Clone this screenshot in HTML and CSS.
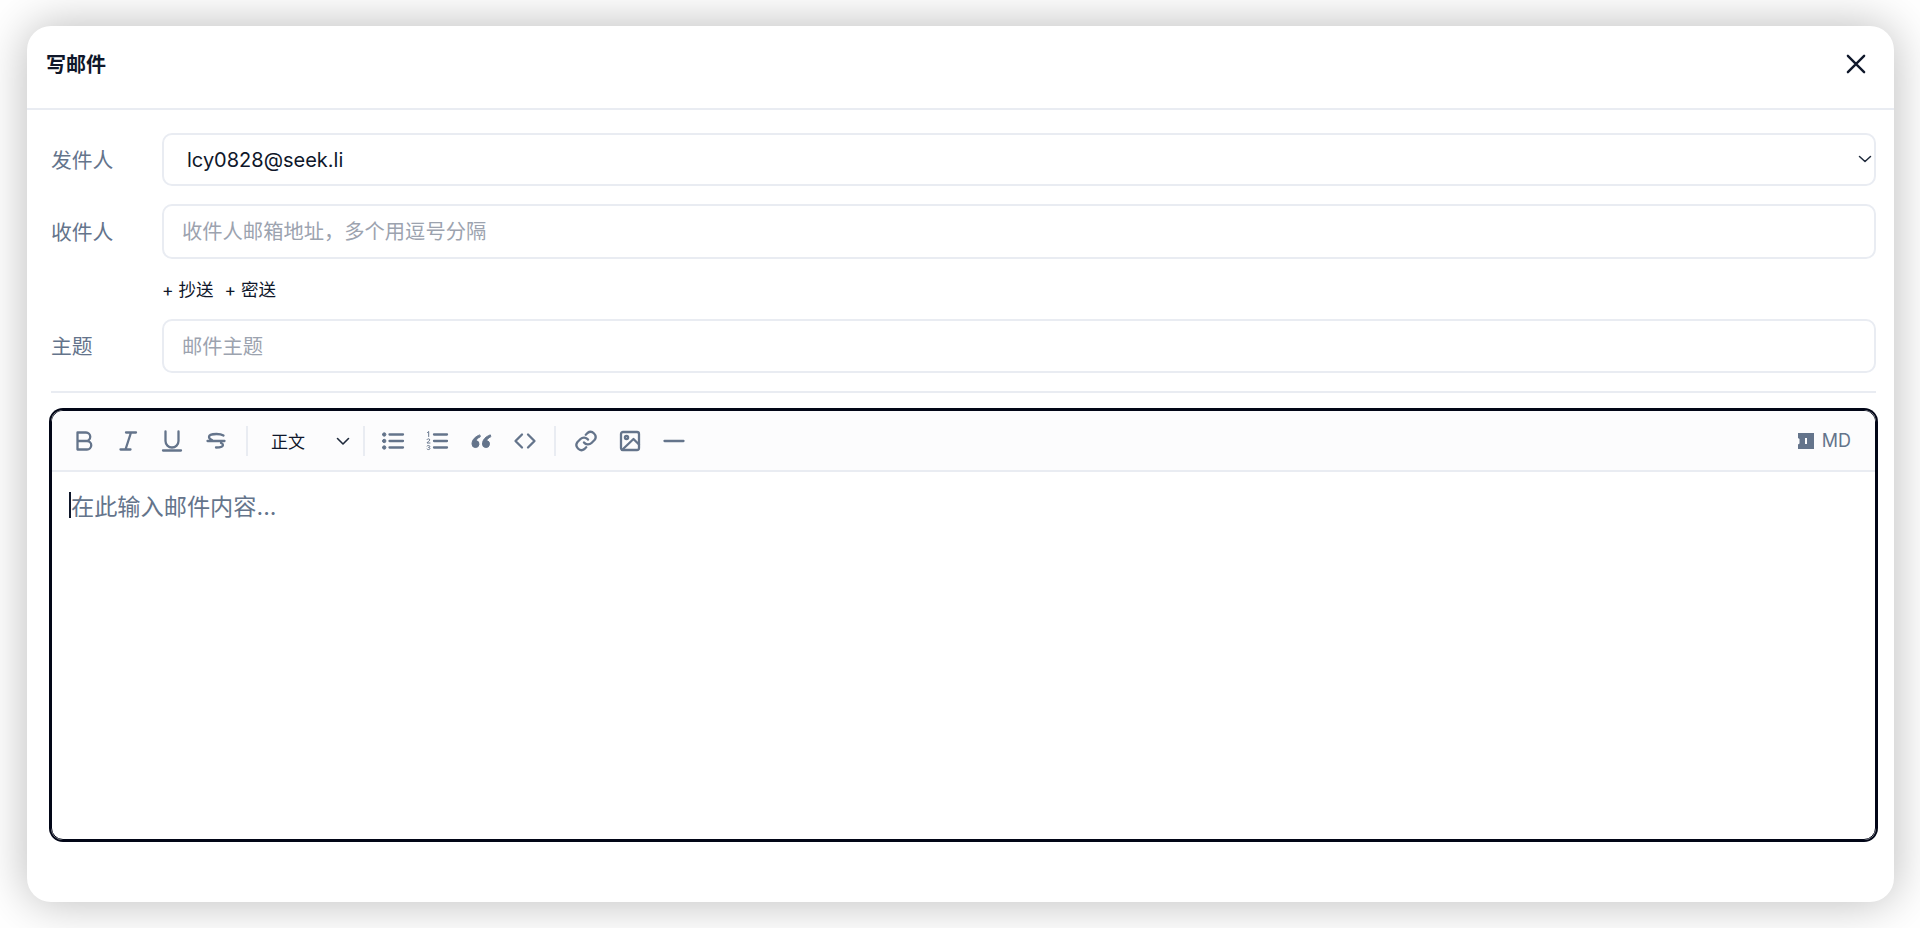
FILE: index.html
```html
<!DOCTYPE html>
<html lang="zh-CN">
<head>
    <meta charset="UTF-8">
    <meta name="viewport" content="width=device-width, initial-scale=1.0">
    <title>写邮件</title>
    <link rel="stylesheet" href="styles.css">
</head>
<body>
    <div class="modal">
        <header class="modal-header">
            <h1>写邮件</h1>
            <button class="close-button" aria-label="关闭">
                <svg width="26" height="26" viewBox="0 0 24 24" fill="none" stroke="#0f172a" stroke-width="2.2" stroke-linecap="round"><path d="M4.5 4.5l15 15M19.5 4.5l-15 15"/></svg>
            </button>
        </header>
        <div class="modal-body">
            <div class="form-row from-row">
                <label>发件人</label>
                <div class="select-wrap">
                    <select class="field from-select">
                        <option>lcy0828@seek.li</option>
                    </select>
                    <svg class="select-arrow" width="16" height="16" viewBox="0 0 16 16" fill="none" stroke="#1e293b" stroke-width="1.5" stroke-linecap="round" stroke-linejoin="round"><path d="M2.5 5.5L8 10.5l5.5-5"/></svg>
                </div>
            </div>
            <div class="form-row to-row">
                <label>收件人</label>
                <input class="field" type="text" placeholder="收件人邮箱地址，多个用逗号分隔">
            </div>
            <div class="cc-links">
                <a>+ 抄送</a>
                <a>+ 密送</a>
            </div>
            <div class="form-row subject-row">
                <label>主题</label>
                <input class="field" type="text" placeholder="邮件主题">
            </div>
            <div class="divider"></div>
            <div class="editor">
                <div class="toolbar">
                    <button class="tool" title="粗体"><svg viewBox="0 0 24 24"><path d="M5.500 3.500h8.500a4.250 4.250 0 0 1 0 8.500h-8.500zM5.500 12h9.500a4.250 4.250 0 0 1 0 8.500H5.500z"/></svg></button>
                    <button class="tool" title="斜体"><svg viewBox="0 0 24 24"><path d="M10 3.500h10M4.500 20.500h10M15 3.500l-5.500 17"/></svg></button>
                    <button class="tool" title="下划线"><svg viewBox="0 0 24 24"><path d="M5.500 2.500v9.500a6.500 6.500 0 0 0 13 0V2.500M3 21.500h18"/></svg></button>
                    <button class="tool" title="删除线"><svg viewBox="0 0 24 24"><path d="M19.500 6.500C17.500 5.300 15 5 12.500 5 8 5 5 6 5 8c0 1.300 1.200 2.300 3 3M3.500 12h17M17 14c1.300.5 2 1.200 2 2 0 1.600-3 2.500-7 2.500"/></svg></button>
                    <span class="tool-sep"></span>
                    <div class="format-select">
                        <span>正文</span>
                        <svg width="16" height="16" viewBox="0 0 16 16" fill="none" stroke="#1e293b" stroke-width="1.6" stroke-linecap="round" stroke-linejoin="round"><path d="M2.500 5.500L8 11l5.500-5.500"/></svg>
                    </div>
                    <span class="tool-sep after-format"></span>
                    <button class="tool" title="无序列表"><svg viewBox="0 0 24 24"><path d="M8.500 5.500H22M8.500 12H22M8.500 18.500H22"/><path class="dot" d="M1.500 5.500a1.700 1.700 0 1 0 3.400 0a1.700 1.700 0 1 0-3.400 0M1.500 12a1.700 1.700 0 1 0 3.400 0a1.700 1.700 0 1 0-3.400 0M1.500 18.500a1.700 1.700 0 1 0 3.400 0a1.700 1.700 0 1 0-3.400 0"/></svg></button>
                    <button class="tool" title="有序列表"><svg viewBox="0 0 24 24"><path d="M9 5.500H22M9 12H22M9 18.500H22"/><path class="thin" d="M2.500 3.500l1.200-1v5M2 10.500c.5-1 2.800-1 2.800.5 0 1-2.800 2-2.800 3h3M2 17c.6-.8 2.800-.8 2.800.5 0 .6-.6.9-1.300.9.700 0 1.400.4 1.400 1.100 0 1.400-2.300 1.400-2.900.5"/></svg></button>
                    <button class="tool" title="引用"><svg viewBox="0 0 24 24"><path class="dot" d="M10.500 6C6.500 7.500 3 10.500 3 15a3.500 3.500 0 1 0 4.200-3.400c.3-1.300 1.700-2.700 3.800-3.700zM21 6c-4 1.500-7.500 4.500-7.500 9a3.500 3.500 0 1 0 4.200-3.400c.3-1.300 1.700-2.700 3.800-3.700z"/></svg></button>
                    <button class="tool" title="代码"><svg viewBox="0 0 24 24"><path d="M9 5.500L2.500 12 9 18.500M15 5.500l6.500 6.500-6.500 6.500"/></svg></button>
                    <span class="tool-sep before-link"></span>
                    <button class="tool" title="链接"><svg viewBox="0 0 24 24"><path d="M10 13.500a5 5 0 0 0 7.500.5l3-3a5 5 0 0 0-7-7l-1.700 1.700"/><path d="M14 10.500a5 5 0 0 0-7.500-.5l-3 3a5 5 0 0 0 7 7l1.700-1.700"/></svg></button>
                    <button class="tool" title="图片"><svg viewBox="0 0 24 24"><rect x="3" y="3" width="18" height="18" rx="2"/><circle cx="8.500" cy="8.500" r="1.600"/><path d="M21 15.500L15.500 10 4 21"/></svg></button>
                    <button class="tool" title="分隔线"><svg viewBox="0 0 24 24"><path d="M2.500 12h19"/></svg></button>
                    <div class="md-toggle">
                        <svg width="16" height="16" viewBox="0 0 16 16"><path fill="#64748b" fill-rule="evenodd" d="M0 0h16v16H0v-4.500l1.500-1V6L0 5zM7 5v6h2V5z"/></svg>
                        <span>MD</span>
                    </div>
                </div>
                <div class="editor-content">
                    <span class="caret"></span><span class="editor-placeholder">在此输入邮件内容...</span>
                </div>
            </div>
        </div>
    </div>
</body>
</html>
```

FILE: styles.css
```css
* {
    box-sizing: border-box;
}
body {
    font-family: 'Inter', 'Noto Sans CJK SC', sans-serif;
    margin: 0;
    padding: 26px 26px 26px 27px;
    height: 928px;
    overflow: hidden;
    background-color: white;
    color: #0f172a;
}
.modal {
    height: 876px;
    background-color: white;
    border-radius: 24px;
    box-shadow: 0 0 48px rgba(0, 0, 0, 0.28);
}
.modal-header {
    display: flex;
    align-items: center;
    justify-content: space-between;
    height: 84px;
    padding: 0 25px 7px 19px;
    border-bottom: 2px solid #e9ecf2;
}
.modal-header h1 {
    margin: 0;
    font-size: 20px;
    font-weight: 700;
    color: #0f172a;
}
.close-button {
    display: flex;
    padding: 0;
    background: none;
    border: none;
    cursor: pointer;
}
.modal-body {
    padding: 23px 18px 0 24px;
}
.form-row {
    display: flex;
    align-items: center;
}
.form-row label {
    width: 111px;
    flex-shrink: 0;
    padding-bottom: 2px;
    font-size: 20.8px;
    color: #64748b;
}
.from-row {
    height: 53px;
}
.to-row {
    height: 55px;
    margin-top: 18px;
}
.subject-row {
    height: 54px;
}
.select-wrap {
    position: relative;
    flex: 1;
    height: 100%;
}
.field {
    flex: 1;
    width: 100%;
    height: 100%;
    padding: 0 18px;
    font-family: inherit;
    font-size: 20.3px;
    color: #0f172a;
    background-color: white;
    border: 2px solid #e9ecf2;
    border-radius: 10px;
    outline: none;
}
.field::placeholder {
    color: #9ca3af;
    opacity: 1;
}
.from-select {
    appearance: none;
    padding-left: 23px;
    font-size: 20px;
}
.select-arrow {
    position: absolute;
    right: 3px;
    top: 18px;
}
.cc-links {
    display: flex;
    gap: 11px;
    height: 58px;
    margin-bottom: 2px;
    align-items: center;
    padding-left: 111px;
    font-size: 17.5px;
    color: #0f172a;
}
.cc-links a {
    cursor: pointer;
}
.divider {
    height: 2px;
    margin-top: 18px;
    background-color: #e9ecf2;
}
.editor {
    height: 430px;
    margin-top: 17px;
    border: 1px solid #020617;
    border-radius: 12px;
    box-shadow: 0 0 0 2px #020617;
    overflow: hidden;
}
.toolbar {
    display: flex;
    align-items: center;
    height: 61px;
    padding: 0 24px 0 10px;
    background-color: #fcfcfd;
    border-bottom: 2px solid #e9ecf2;
}
.tool {
    display: flex;
    align-items: center;
    justify-content: center;
    width: 44px;
    height: 44px;
    padding: 0;
    background: none;
    border: none;
    cursor: pointer;
}
.tool svg {
    width: 24px;
    height: 24px;
    fill: none;
    stroke: #64748b;
    stroke-width: 2.3;
    stroke-linecap: round;
    stroke-linejoin: round;
}
.tool svg .dot {
    fill: #64748b;
    stroke-width: 1;
}
.tool svg .thin {
    stroke-width: 1;
}
.tool-sep {
    width: 2px;
    height: 30px;
    margin: 0 8px;
    background-color: #e9ecf2;
}
.after-format {
    margin-right: 6px;
}
.before-link {
    margin-left: 7px;
}
.format-select {
    display: flex;
    align-items: center;
    justify-content: space-between;
    width: 99px;
    padding: 0 4px 0 15px;
    font-size: 17px;
    color: #0f172a;
}
.md-toggle {
    display: flex;
    align-items: center;
    gap: 8px;
    margin-left: auto;
    font-size: 18px;
    color: #64748b;
}
.editor-content {
    display: flex;
    align-items: center;
    height: 26px;
    margin-top: 20px;
    padding-left: 17px;
    font-size: 23.2px;
    color: #64748b;
}
.caret {
    width: 2px;
    height: 26px;
    background-color: #0f172a;
}
```
